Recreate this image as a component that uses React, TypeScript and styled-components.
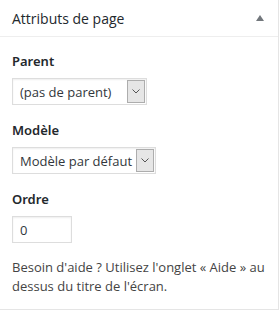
import React from 'react';
import styled, { createGlobalStyle } from 'styled-components';

const GlobalStyle = createGlobalStyle`
  html, body {
    margin: 0;
    padding: 0;
    background: #fff;
  }
  body {
    font-family: "Open Sans", "Noto Sans", sans-serif;
    color: #444;
  }
`;

const Panel = styled.div`
  width: 278px;
  height: 309px;
  background: #fff;
  border-right: 1px solid #e5e5e5;
  border-bottom: 1px solid #e5e5e5;
`;

const Header = styled.div`
  height: 36px;
  display: flex;
  align-items: center;
  justify-content: space-between;
  padding: 0 12px;
  border-bottom: 1px solid #eee;
`;

const Title = styled.h2`
  margin: 0;
  font-size: 14px;
  font-weight: 400;
  color: #23282d;
`;

const Toggle = styled.span`
  width: 0;
  height: 0;
  border-left: 4px solid transparent;
  border-right: 4px solid transparent;
  border-bottom: 6px solid #72777c;
  margin-right: 2px;
`;

const Body = styled.div`
  padding: 14px 12px 0;
`;

const Label = styled.p`
  margin: 0 0 7px;
  font-family: "Noto Sans", "Open Sans", sans-serif;
  font-size: 13px;
  font-weight: 600;
  color: #23282d;
  line-height: 20px;
`;

const Field = styled.div`
  margin-bottom: 15px;
`;

const SelectBox = styled.div<{ $w: number }>`
  width: ${(p) => p.$w}px;
  height: 27px;
  box-sizing: border-box;
  border: 1px solid #ddd;
  box-shadow: inset 0 1px 2px rgba(0, 0, 0, 0.07);
  display: flex;
  align-items: stretch;
  font-size: 13px;
  color: #32373c;
`;

const SelectText = styled.span`
  flex: 1;
  padding-left: 7px;
  display: flex;
  align-items: center;
  white-space: nowrap;
  overflow: hidden;
`;

const Arrow = styled.span`
  width: 16px;
  margin: 1px;
  background: #e6e6e6;
  border: 1px solid #adadad;
  display: flex;
  align-items: center;
  justify-content: center;
`;

const NumberInput = styled.div`
  width: 60px;
  height: 27px;
  box-sizing: border-box;
  border: 1px solid #ddd;
  box-shadow: inset 0 1px 2px rgba(0, 0, 0, 0.07);
  padding-left: 7px;
  display: flex;
  align-items: center;
  font-size: 13px;
  color: #32373c;
`;

const Help = styled.p`
  margin: 0;
  font-size: 13px;
  line-height: 19px;
  color: #444;
`;

const Chevron = () => (
  <svg width="8" height="5" viewBox="0 0 8 5">
    <path d="M0.5 0.5 L4 4 L7.5 0.5" fill="none" stroke="#555" strokeWidth="1" />
  </svg>
);

const Select = ({ value, width }: { value: string; width: number }) => (
  <SelectBox $w={width}>
    <SelectText>{value}</SelectText>
    <Arrow>
      <Chevron />
    </Arrow>
  </SelectBox>
);

export default function App() {
  return (
    <>
      <GlobalStyle />
      <Panel>
        <Header>
          <Title>Attributs de page</Title>
          <Toggle />
        </Header>
        <Body>
          <Label>Parent</Label>
          <Field>
            <Select value="(pas de parent)" width={135} />
          </Field>
          <Label>Modèle</Label>
          <Field>
            <Select value="Modèle par défaut" width={144} />
          </Field>
          <Label>Ordre</Label>
          <Field>
            <NumberInput>0</NumberInput>
          </Field>
          <Help>
            Besoin d'aide ? Utilisez l'onglet « Aide » au dessus du titre de l'écran.
          </Help>
        </Body>
      </Panel>
    </>
  );
}
